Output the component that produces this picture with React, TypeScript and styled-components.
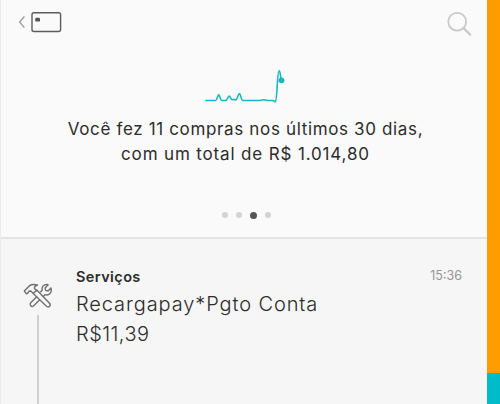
import React from "react";
import styled, { createGlobalStyle } from "styled-components";

const colors = {
  teal: "#18b8c0",
  stripeTeal: "#00bccb",
  orange: "#ff9c00",
  text: "#2c2c2c",
};

const GlobalStyle = createGlobalStyle`
  * {
    box-sizing: border-box;
  }

  body {
    margin: 0;
    font-family: Inter, "Liberation Sans", sans-serif;
    color: ${colors.text};
  }
`;

const Screen = styled.div`
  display: flex;
  width: 500px;
  height: 404px;
  overflow: hidden;
`;

const Content = styled.main`
  display: flex;
  flex-direction: column;
  width: 487px;
  border-left: 1px solid #ececec;
  background: #f6f6f6;
`;

const Stripe = styled.aside`
  display: flex;
  flex-direction: column;
  width: 13px;
`;

const StripePart = styled.div<{ $color: string; $grow?: boolean }>`
  flex: ${({ $grow }) => ($grow ? "1" : "0 0 31px")};
  background: ${({ $color }) => $color};
`;

const Summary = styled.section`
  display: flex;
  flex-direction: column;
  align-items: center;
  height: 239px;
  border-bottom: 2px solid #e4e4e4;
  background: #fafafa;
`;

const TopBar = styled.header`
  display: flex;
  justify-content: space-between;
  align-items: flex-start;
  width: 100%;
  height: 66px;
  padding: 11px 15px 0 17px;
`;

const IconButton = styled.button`
  display: flex;
  padding: 0;
  border: none;
  background: none;
  cursor: pointer;
`;

const Chart = styled.div`
  display: flex;
  padding-left: 4px;
`;

const SummaryText = styled.p`
  margin: 13px 0 0;
  padding-left: 3px;
  font-size: 17px;
  line-height: 25px;
  text-align: center;
  white-space: nowrap;
`;

const SummaryLine = styled.span<{ $spacing: number }>`
  display: block;
  letter-spacing: ${({ $spacing }) => $spacing}px;
`;

const Dots = styled.div`
  display: flex;
  align-items: center;
  gap: 8px;
  height: 8px;
  margin-top: 44px;
  padding-left: 5px;
`;

const Dot = styled.span<{ $active?: boolean }>`
  width: ${({ $active }) => ($active ? 7 : 6)}px;
  height: ${({ $active }) => ($active ? 7 : 6)}px;
  border-radius: 50%;
  background: ${({ $active }) => ($active ? "#555555" : "#d3d3d3")};
`;

const Entry = styled.article`
  display: flex;
  flex: 1;
  padding: 28px 25px 0 22px;
`;

const Timeline = styled.div`
  display: flex;
  flex-direction: column;
  align-items: center;
  width: 30px;
  margin-right: 23px;
  padding-top: 16px;
`;

const TimelineBar = styled.div`
  flex: 1;
  width: 2px;
  margin-top: 6px;
  background: #cfcfcf;
`;

const Details = styled.div`
  flex: 1;
  white-space: nowrap;
`;

const Category = styled.h2`
  margin: 0 0 2px;
  font-size: 14.5px;
  font-weight: 600;
  line-height: 20px;
  letter-spacing: 0.4px;
`;

const Description = styled.p<{ $spacing: number }>`
  margin: 0;
  font-size: 20px;
  font-weight: 300;
  line-height: 30px;
  letter-spacing: ${({ $spacing }) => $spacing}px;
`;

const Time = styled.time`
  color: #949494;
  font-size: 12.5px;
  line-height: 17px;
`;

const CardIcon = () => (
  <svg width="46" height="24" viewBox="18 11 46 24" fill="none">
    <path d="M24.4 16.5 19.6 22l4.8 5.6" stroke="#999" strokeWidth="1.3" />
    <rect x="32" y="12.7" width="28.6" height="18.8" rx="2" stroke="#5c5c5c" strokeWidth="1.4" />
    <rect x="35.2" y="17.8" width="4.8" height="3.8" rx="1.2" fill="#555" />
  </svg>
);

const SearchIcon = () => (
  <svg width="26" height="26" viewBox="446 11 26 26" fill="none" stroke="#c9c9c9">
    <circle cx="457.2" cy="21.7" r="8.9" strokeWidth="1.8" />
    <path d="m463.7 28.2 6.5 6.6" strokeWidth="2.3" strokeLinecap="round" />
  </svg>
);

const Sparkline = () => (
  <svg width="82" height="38" viewBox="205.5 66 82 38" fill="none">
    <path
      d="M206.5 100.5h9.7c1.3 0 1.9-5.6 3-5.6s1.7 5.6 3 5.6h4.2c1.3 0 2-4.4 3.2-4.4s1.7 3.7 3 3.7 1.2-.8 2.2-.4 1 .8 1.8.4c1.3-.7 2.2-6.2 3.4-6.2s1.6 6.9 3.3 6.9H260c2 0 2.5-.8 4-.8s2 .8 4 .8h5.6c1 0 1.2 1.4 2.2 1.2 2-.5 1.8-31 3.8-31 1.2 0 1.2 5.6 2.2 9"
      stroke={colors.teal}
      strokeWidth="1.6"
      strokeLinejoin="round"
      strokeLinecap="round"
    />
    <circle cx="282" cy="80.3" r="2.9" fill={colors.teal} />
  </svg>
);

const ToolsIcon = () => (
  <svg
    width="30"
    height="26"
    viewBox="23 283 30 26"
    fill="none"
    stroke="#707070"
    strokeWidth="1.4"
    strokeLinejoin="round"
  >
    <path d="m40.2 292.3 2-2c-.8-3.2 1.2-5.8 4.8-5.9l1.2.4-3.1 3.1.5 2.5 2.5.6 2.8-2.9c1.6 4.2-2 8-5.9 6.6l-2.3 2.3m-3 2.7-6 6c-2.3 1.9-4.8-.8-3-2.9l6.3-6.2" />
    <path d="m33.4 293.5-2.6-2.5-2 .3-1.2 2.1-1.2.3-2.1-2.6 5-5.2c2.2-1.7 5.1-1.6 8.2-.9-2.5.8-3.4 1.7-3 3.6l2.7 2.7" />
    <path d="m33.2 293.6 3.6-3.5 12.7 13.1c2 2.3-.7 5-3 3Z" />
  </svg>
);

const App = () => {
  return (
    <>
      <GlobalStyle />
      <Screen>
        <Content>
          <Summary>
            <TopBar>
              <IconButton aria-label="Voltar">
                <CardIcon />
              </IconButton>
              <IconButton aria-label="Buscar">
                <SearchIcon />
              </IconButton>
            </TopBar>
            <Chart>
              <Sparkline />
            </Chart>
            <SummaryText>
              <SummaryLine $spacing={0.65}>Você fez 11 compras nos últimos 30 dias,</SummaryLine>
              <SummaryLine $spacing={0.85}>com um total de R$ 1.014,80</SummaryLine>
            </SummaryText>
            <Dots>
              <Dot />
              <Dot />
              <Dot $active />
              <Dot />
            </Dots>
          </Summary>
          <Entry>
            <Timeline>
              <ToolsIcon />
              <TimelineBar />
            </Timeline>
            <Details>
              <Category>Serviços</Category>
              <Description $spacing={0.9}>Recargapay*Pgto Conta</Description>
              <Description $spacing={0.45}>R$11,39</Description>
            </Details>
            <Time>15:36</Time>
          </Entry>
        </Content>
        <Stripe>
          <StripePart $color={colors.orange} $grow />
          <StripePart $color={colors.stripeTeal} />
        </Stripe>
      </Screen>
    </>
  );
};

export default App;
